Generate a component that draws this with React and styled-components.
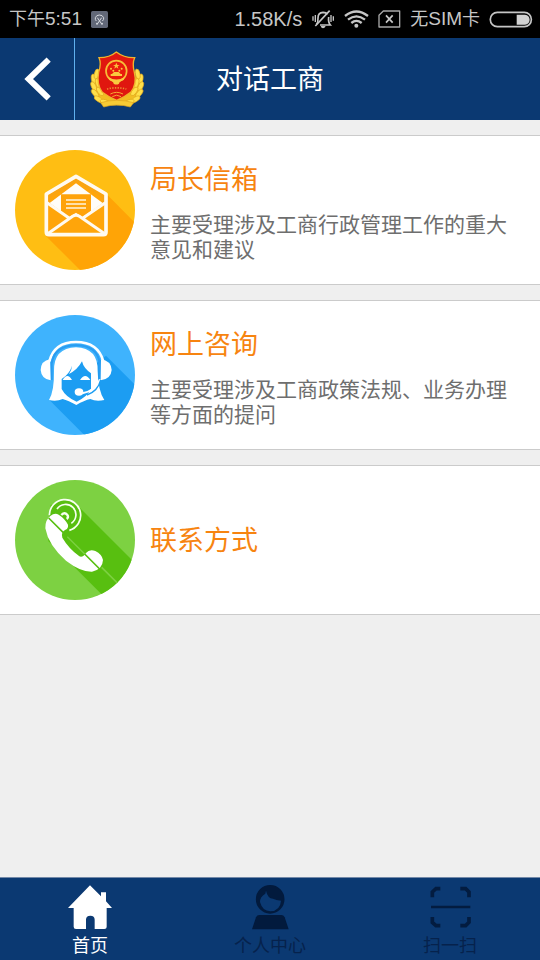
import React from 'react';
import styled, { createGlobalStyle } from 'styled-components';

const GlobalStyle = createGlobalStyle`
  * { box-sizing: border-box; }
  body {
    margin: 0;
    background: #efefef;
    font-family: "Liberation Sans", "Noto Sans CJK SC", sans-serif;
  }
`;

const Screen = styled.div`
  display: flex;
  flex-direction: column;
  min-height: 100vh;
`;

const StatusBar = styled.div`
  display: flex;
  align-items: center;
  justify-content: space-between;
  height: 38px;
  padding: 0 7px 0 9px;
  background: #000;
  color: #c6c6c6;
`;

const StatusGroup = styled.div`
  display: flex;
  align-items: center;
  gap: 9px;
`;

const StatusText = styled.span`
  display: flex;
  align-items: center;
  font-size: ${(p) => (p.$large ? 20 : 19)}px;
  line-height: 24px;
  white-space: nowrap;
`;

const Hanzi = styled.span`
  font-size: 18px;
`;

const Icon = styled.svg`
  display: block;
  flex: none;
  width: ${(p) => p.$w}px;
  height: ${(p) => p.$h}px;
`;

const Header = styled.header`
  display: grid;
  grid-template-columns: 1fr auto 1fr;
  align-items: center;
  height: 82px;
  background: #0b3972;
`;

const HeaderStart = styled.div`
  display: flex;
  align-items: center;
  gap: 15px;
  height: 82px;
`;

const BackButton = styled.button`
  display: flex;
  align-items: center;
  justify-content: center;
  width: 75px;
  height: 100%;
  padding: 0;
  border: 0;
  border-right: 1px solid #60b0ee;
  background: none;
  cursor: pointer;
`;

const PageTitle = styled.h1`
  margin: 0;
  padding-top: 2px;
  color: #fff;
  font-size: 27px;
  font-weight: 400;
  line-height: 40px;
`;

const CardList = styled.main`
  display: flex;
  flex: 1;
  flex-direction: column;
  gap: 15px;
  padding: 15px 0;
`;

const Card = styled.a`
  display: flex;
  align-items: center;
  gap: 15px;
  min-height: 150px;
  padding: 14px 15px;
  border: solid #cbcbcb;
  border-width: 1px 0;
  background: #fff;
  text-decoration: none;
`;

const CardBody = styled.div`
  flex: 1;
  min-width: 0;
`;

const CardTitle = styled.h2`
  margin: 0;
  padding-top: 2px;
  color: #f78410;
  font-size: 27px;
  font-weight: 400;
  line-height: 40px;
`;

const CardText = styled.p`
  margin: 12px 0 0;
  color: #6e6e6e;
  font-size: 21px;
  line-height: 25px;
`;

const TabBar = styled.nav`
  display: grid;
  grid-template-columns: repeat(3, 1fr);
  border-top: 1px solid #7389a8;
  background: #0b3972;
`;

const Tab = styled.a`
  display: flex;
  flex-direction: column;
  align-items: center;
  gap: 6px;
  padding: 7px 0 4px;
  color: ${(p) => (p.$active ? '#fff' : '#06224c')};
  font-size: 18px;
  line-height: 20px;
  text-decoration: none;
`;

const ScreenshotIcon = () => (
  <Icon $w={17} $h={17} viewBox="267 30 51 51" aria-hidden="true">
    <rect x="267" y="30" width="51" height="51" rx="5" fill="#626878" />
    <path d="M283 60 Q279 57 280 50 Q283 42 292 42 Q302 42 305 50 Q306 57 301 60 M286 50 L299 69 M299 50 L286 69" fill="none" stroke="#d5d8de" strokeWidth="3" />
    <circle cx="285" cy="68" r="3" fill="#d5d8de" />
    <circle cx="300" cy="68" r="3" fill="#d5d8de" />
  </Icon>
);

const MutedBellIcon = () => (
  <Icon $w={24} $h={20} viewBox="260 26 72 60" aria-hidden="true">
    <g fill="none" stroke="#c6c6c6" strokeWidth="5">
      <path d="M276 73 Q282 66 281 53 Q281 37 296 36 Q306 36 309 42 M313 50 Q311 66 318 74 H287" />
      <path d="M316 31 L273 77" />
      <path d="M273 44 V65 M266 48 V61 M320 44 V65 M327 48 V61" strokeWidth="4" />
    </g>
    <path d="M289 77 H304 Q301 84 296 84 Q291 84 289 77 Z" fill="#c6c6c6" />
  </Icon>
);

const WifiIcon = () => (
  <Icon $w={25} $h={18} viewBox="360 28 75 54" aria-hidden="true">
    <g fill="none" stroke="#c6c6c6" strokeWidth="7">
      <path d="M363 46 Q397 19 432 46" />
      <path d="M372 57 Q397 37 423 57" />
      <path d="M382 67 Q397 54 413 67" />
    </g>
    <circle cx="397" cy="75" r="6" fill="#c6c6c6" />
  </Icon>
);

const NoSimIcon = () => (
  <Icon $w={23} $h={18} viewBox="464 28 69 54" aria-hidden="true">
    <path d="M467 44 L480 31 H529 V79 H467 Z" fill="none" stroke="#a8a8a8" strokeWidth="4" strokeLinejoin="round" />
    <path d="M488 44 L508 66 M508 44 L488 66" stroke="#c6c6c6" strokeWidth="5" />
  </Icon>
);

const BatteryIcon = () => (
  <Icon $w={44} $h={17} viewBox="792 30 132 51" aria-hidden="true">
    <rect x="796" y="34" width="123" height="43" rx="21" fill="none" stroke="#c6c6c6" strokeWidth="5" />
    <path d="M875 41 H900 Q913 42 914 56 Q913 70 900 71 H875 Z" fill="#d2d2d2" />
  </Icon>
);

const ChevronIcon = () => (
  <Icon $w={27} $h={44} viewBox="67 172 81 132" aria-hidden="true">
    <path d="M141 180 L81 238 L141 296" fill="none" stroke="#fff" strokeWidth="18" />
  </Icon>
);

const leaves = [
  [281, 237, -8], [281, 259, -22], [285, 280, -38], [296, 298, -58],
  [290, 222, 12], [294, 250, -15], [300, 274, -35], [315, 306, -75],
];

const EmblemSide = () => (
  <g>
    <path d="M291 208 Q274 233 281 265 Q284 300 322 316 H352 V300 L307 270 Z" fill="#f2bd22" />
    {leaves.map(([x, y, r]) => (
      <g key={`${x}-${y}`} transform={`translate(${x} ${y}) rotate(${r})`}>
        <ellipse rx="7" ry="15" fill="#ffe04a" stroke="#dea51c" strokeWidth="2" />
      </g>
    ))}
  </g>
);

const EmblemIcon = () => (
  <Icon $w={55} $h={58} viewBox="270 150 165 174" role="img" aria-label="工商徽标">
    <EmblemSide />
    <g transform="translate(703 0) scale(-1 1)"><EmblemSide /></g>
    <path d="M302 308 Q350 294 401 308 L391 321 Q350 309 311 321 Z" fill="#f7cb35" stroke="#dea51c" strokeWidth="2" />
    <path d="M349 156 Q372 174 404 173 Q396 190 403 217 Q412 253 392 277 Q375 291 350 301 Q325 291 307 277 Q289 253 296 217 Q305 190 297 173 Q329 173 349 156 Z" fill="#e0170f" stroke="#efb42c" strokeWidth="4" />
    <circle cx="349" cy="213" r="31" fill="#e91b0d" stroke="#f7bd38" strokeWidth="5" />
    <path d="M349 188 L352 195 H359 L353 199 L355 206 L349 202 L343 206 L345 199 L339 195 H346 Z" fill="#f9bd3c" />
    <g fill="#f9c93f">
      <circle cx="333" cy="206" r="3" /><circle cx="340" cy="212" r="3" />
      <circle cx="358" cy="212" r="3" /><circle cx="365" cy="206" r="3" />
      <path d="M332 222 H336 L342 216 H356 L362 222 H366 V228 H332 Z" />
      <path d="M325 231 Q349 246 374 231 L371 240 Q358 244 357 251 Q349 256 341 251 Q340 244 328 240 Z" />
    </g>
    <path d="M321 267 Q349 260 379 267" fill="none" stroke="#ed8e31" strokeWidth="5" strokeDasharray="4 4" />
    <path d="M331 282 Q350 272 369 282 M337 290 Q350 281 363 290" fill="none" stroke="#f6a832" strokeWidth="3" />
  </Icon>
);

const MailIcon = () => (
  <Icon $w={120} $h={120} viewBox="45 45 360 360" aria-hidden="true">
    <defs><clipPath id="mail-disc"><circle cx="225" cy="225" r="180" /></clipPath></defs>
    <g clipPath="url(#mail-disc)">
      <path d="M45 45 H405 V405 H45 Z" fill="#ffbe13" />
      <path d="M323 181 L423 281 V423 H258 L137 302 Z" fill="#ffa406" />
    </g>
    <path d="M139 177 L228 124 L318 177 V291 Q318 299 310 299 H147 Q139 299 139 291 Z" fill="#ffa50a" stroke="#fffaf0" strokeWidth="11" strokeLinejoin="round" />
    <path d="M149 204 L228 145 L308 204 L246 249 L228 236 L211 249 Z" fill="#fffdf8" />
    <path d="M148 201 V184 L228 136 L309 184 V201" fill="none" stroke="#f8a414" strokeWidth="6" />
    <path d="M183 178 H273 V229 L247 247 L228 233 L207 247 L183 229 Z" fill="#ffa30a" />
    <path d="M198 195 H258 M198 207 H258 M198 219 H258" stroke="#fff5dd" strokeWidth="4" />
    <path d="M141 203 L207 249 M316 203 L249 249 M142 297 L218 244 Q228 238 238 244 L315 297" fill="none" stroke="#fffaf0" strokeWidth="9" />
  </Icon>
);

const ConsultIcon = () => (
  <Icon $w={120} $h={120} viewBox="45 45 360 360" aria-hidden="true">
    <defs><clipPath id="consult-disc"><circle cx="225" cy="225" r="180" /></clipPath></defs>
    <g clipPath="url(#consult-disc)">
      <path d="M45 45 H405 V405 H45 Z" fill="#3fb3fd" />
      <path d="M318 167 L423 272 V423 H271 L149 301 Z" fill="#1c9df2" />
    </g>
    <path d="M162 213 Q161 144 228 142 Q294 144 293 213 Q294 272 313 300 Q288 306 271 297 Q253 301 229 315 Q205 302 188 297 Q170 305 147 300 Q163 273 162 213 Z" fill="#fff" />
    <path d="M185 237 Q209 221 216 197 Q215 212 207 222 Q233 209 246 184 Q251 205 273 220 V267 Q262 290 230 305 Q197 291 185 267 Z" fill="#1c9df2" />
    <path d="M188 240 Q202 216 216 240 Z M240 240 Q256 216 271 240 Z" fill="#fff" />
    <path d="M148 184 Q163 126 228 126 Q294 126 310 184" fill="none" stroke="#fff" strokeWidth="8" />
    <path d="M155 240 V190 Q164 136 228 136 Q292 136 299 190 V236" fill="none" stroke="#2a9cf0" strokeWidth="6" />
    <path d="M150 178 Q123 182 122 210 Q124 237 152 241 Z M303 178 Q333 182 335 210 Q333 237 302 241 Z" fill="#fff" />
    <path d="M300 238 Q288 272 247 280" fill="none" stroke="#fff" strokeWidth="6" />
    <path d="M302 240 Q294 273 261 285" fill="none" stroke="#1c9df2" strokeWidth="4" />
    <ellipse cx="237" cy="276" rx="13" ry="11" fill="#fff" />
  </Icon>
);

const PhoneIcon = () => (
  <Icon $w={120} $h={120} viewBox="45 45 360 360" aria-hidden="true">
    <defs><clipPath id="phone-disc"><circle cx="225" cy="225" r="180" /></clipPath></defs>
    <g clipPath="url(#phone-disc)">
      <path d="M45 45 H405 V405 H45 Z" fill="#7dd142" />
      <path d="M232 121 L423 312 V423 H340 L145 228 L152 119 Z" fill="#58bf10" />
      <path d="M305 307 L355 357" stroke="#7dd142" strokeWidth="5" />
    </g>
    <circle cx="195" cy="151" r="47" fill="#58bf10" />
    <g fill="none" stroke="#f7fff1" strokeWidth="5">
      <path d="M148 151 A47 47 0 1 1 208 196" />
      <path d="M171 132 A31 31 0 1 1 214 175" />
      <path d="M184 150 Q195 139 203 151 Q206 158 200 162" strokeWidth="7" />
    </g>
    <path d="M151 153 Q164 142 176 149 Q194 160 204 179 Q206 190 195 195 Q182 204 187 218 Q205 249 238 274 Q249 278 258 264 Q268 252 286 258 Q306 268 309 285 Q308 313 276 320 Q242 321 198 287 Q145 241 136 190 Q135 165 151 153 Z" fill="#fff" />
    <path d="M146 159 L208 221 M242 255 L302 315" stroke="#58bf10" strokeWidth="5" />
    <path d="M202 215 L254 267" stroke="#7dd142" strokeWidth="4" />
  </Icon>
);

const HomeIcon = () => (
  <Icon $w={45} $h={45} viewBox="203 45 135 135" aria-hidden="true">
    <path d="M269 46 L302 79 V67 H317 V94 L335 114 H319 V171 Q319 177 312 177 H283 V149 Q283 137 270 137 Q257 137 257 149 V177 H227 Q220 177 220 170 V114 H203 Z" fill="#fff" />
  </Icon>
);

const PersonIcon = () => (
  <Icon $w={45} $h={45} viewBox="67 45 135 135" aria-hidden="true">
    <path fillRule="evenodd" d="M134 45 A43 43 0 1 1 133 131 A43 43 0 1 1 134 45 Z M119 71 Q103 80 103 96 Q110 123 134 124 Q164 122 166 92 Q151 90 142 86 Q126 85 121 62 Z" fill="#021a3d" />
    <path d="M101 135 H167 Q174 135 177 142 L189 178 H79 L91 142 Q94 135 101 135 Z" fill="#021a3d" />
  </Icon>
);

const ScanIcon = () => (
  <Icon $w={45} $h={45} viewBox="608 45 135 135" aria-hidden="true">
    <path d="M621 82 V66 L632 56 H645 M705 56 H721 L731 66 V82 M621 141 V157 L632 167 H645 M705 167 H721 L731 157 V141" fill="none" stroke="#031c40" strokeWidth="11" />
    <path d="M617 111 H735" stroke="#031c40" strokeWidth="8" />
  </Icon>
);

const services = [
  { title: '局长信箱', text: '主要受理涉及工商行政管理工作的重大意见和建议', href: '#mailbox', Art: MailIcon },
  { title: '网上咨询', text: '主要受理涉及工商政策法规、业务办理等方面的提问', href: '#consult', Art: ConsultIcon },
  { title: '联系方式', href: '#contact', Art: PhoneIcon },
];

const tabs = [
  { label: '首页', href: '#home', Art: HomeIcon, active: true },
  { label: '个人中心', href: '#profile', Art: PersonIcon },
  { label: '扫一扫', href: '#scan', Art: ScanIcon },
];

export default function App() {
  return (
    <Screen lang="zh-CN">
      <GlobalStyle />
      <StatusBar>
        <StatusGroup>
          <StatusText><Hanzi>下午</Hanzi>5:51</StatusText>
          <ScreenshotIcon />
        </StatusGroup>
        <StatusGroup>
          <StatusText $large>1.58K/s</StatusText>
          <MutedBellIcon />
          <WifiIcon />
          <NoSimIcon />
          <StatusText><Hanzi>无</Hanzi>SIM<Hanzi>卡</Hanzi></StatusText>
          <BatteryIcon />
        </StatusGroup>
      </StatusBar>
      <Header>
        <HeaderStart>
          <BackButton type="button" aria-label="返回"><ChevronIcon /></BackButton>
          <EmblemIcon />
        </HeaderStart>
        <PageTitle>对话工商</PageTitle>
      </Header>
      <CardList>
        {services.map(({ title, text, href, Art }) => (
          <Card key={title} href={href}>
            <Art />
            <CardBody>
              <CardTitle>{title}</CardTitle>
              {text && <CardText>{text}</CardText>}
            </CardBody>
          </Card>
        ))}
      </CardList>
      <TabBar>
        {tabs.map(({ label, href, Art, active }) => (
          <Tab key={label} href={href} $active={active} aria-current={active ? 'page' : undefined}>
            <Art />
            {label}
          </Tab>
        ))}
      </TabBar>
    </Screen>
  );
}
